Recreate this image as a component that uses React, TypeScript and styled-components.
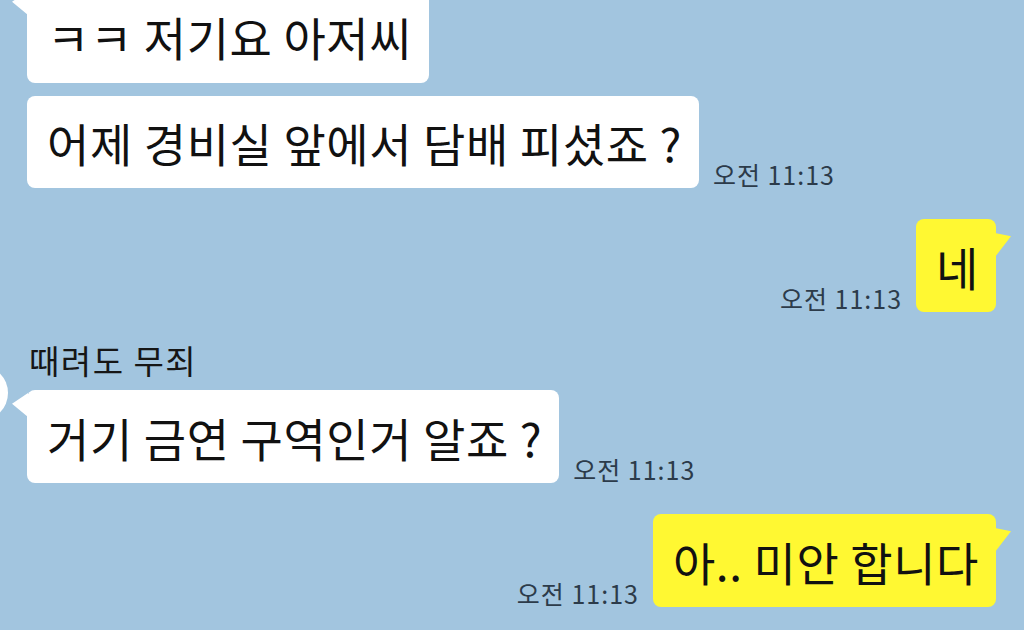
import React from 'react';
import styled, { createGlobalStyle } from 'styled-components';

const GlobalStyle = createGlobalStyle`
  html, body {
    margin: 0;
    padding: 0;
    background: #a2c5df;
    overflow: hidden;
  }
  body {
    font-family: "Noto Sans CJK KR", "Noto Sans", sans-serif;
  }
`;

const Screen = styled.div`
  width: 1024px;
  height: 630px;
  overflow: hidden;
  background: #a2c5df;
`;

const List = styled.div`
  display: flex;
  flex-direction: column;
  gap: 31px;
  margin-top: -12px;
  padding: 0 28px 0 0;
`;

const ReceivedGroup = styled.div`
  display: flex;
  align-items: flex-start;
`;

const Avatar = styled.div<{ $hidden?: boolean }>`
  flex: none;
  width: 56px;
  height: 56px;
  margin: 22px 8px 0 -48px;
  border-radius: 50%;
  background: ${(p) => (p.$hidden ? 'transparent' : '#ffffff')};
`;

const Stack = styled.div`
  display: flex;
  flex-direction: column;
  gap: 13px;
  padding-left: 11px;
`;

const Name = styled.div`
  font-size: 33px;
  line-height: 38px;
  letter-spacing: 1.5px;
  color: #161616;
  margin: -2px 0 -2px 2px;
`;

const Row = styled.div<{ $sent?: boolean }>`
  display: flex;
  align-items: flex-end;
  gap: 14px;
  justify-content: ${(p) => (p.$sent ? 'flex-end' : 'flex-start')};
`;

const Bubble = styled.div<{ $sent?: boolean; $tail?: boolean; $h?: number }>`
  position: relative;
  box-sizing: border-box;
  height: ${(p) => p.$h ?? 93}px;
  display: flex;
  align-items: center;
  padding: 0 17px 0 20px;
  border-radius: 8px;
  background: ${(p) => (p.$sent ? '#fff832' : '#ffffff')};
  color: #111;
  font-size: 46px;
  letter-spacing: 0.6px;
  white-space: nowrap;

  &::before {
    content: '';
    display: ${(p) => (p.$tail ? 'block' : 'none')};
    position: absolute;
    top: ${(p) => (p.$sent ? '14px' : '3px')};
    ${(p) => (p.$sent ? 'right: -15px;' : 'left: -15px;')}
    width: 16px;
    height: 24px;
    background: ${(p) => (p.$sent ? '#fff832' : '#ffffff')};
    clip-path: ${(p) =>
      p.$sent
        ? 'polygon(0 0, 100% 14%, 0 100%)'
        : 'polygon(100% 0, 0 45%, 100% 100%)'};
  }
`;

const Time = styled.span`
  flex: none;
  font-size: 25px;
  line-height: 28px;
  letter-spacing: 1px;
  color: #2c3b4a;
`;

type Msg = { text: string; time?: string; tail?: boolean; h?: number };

const Received = ({ name, msgs, avatar }: { name?: string; msgs: Msg[]; avatar?: boolean }) => (
  <ReceivedGroup>
    <Avatar $hidden={!avatar} />
    <Stack>
      {name && <Name>{name}</Name>}
      {msgs.map((m, i) => (
        <Row key={i}>
          <Bubble $tail={m.tail} $h={m.h}>{m.text}</Bubble>
          {m.time && <Time>{m.time}</Time>}
        </Row>
      ))}
    </Stack>
  </ReceivedGroup>
);

const Sent = ({ text, time }: { text: string; time: string }) => (
  <Row $sent>
    <Time>{time}</Time>
    <Bubble $sent $tail>{text}</Bubble>
  </Row>
);

const App = () => (
  <Screen>
    <GlobalStyle />
    <List>
      <Received
        msgs={[
          { text: 'ㅋㅋ 저기요 아저씨', tail: true, h: 95 },
          { text: '어제 경비실 앞에서 담배 피셨죠 ?', time: '오전 11:13', h: 92 },
        ]}
      />
      <Sent text="네" time="오전 11:13" />
      <Received
        avatar
        name="때려도 무죄"
        msgs={[{ text: '거기 금연 구역인거 알죠 ?', time: '오전 11:13', tail: true }]}
      />
      <Sent text="아.. 미안 합니다" time="오전 11:13" />
    </List>
  </Screen>
);

export default App;
